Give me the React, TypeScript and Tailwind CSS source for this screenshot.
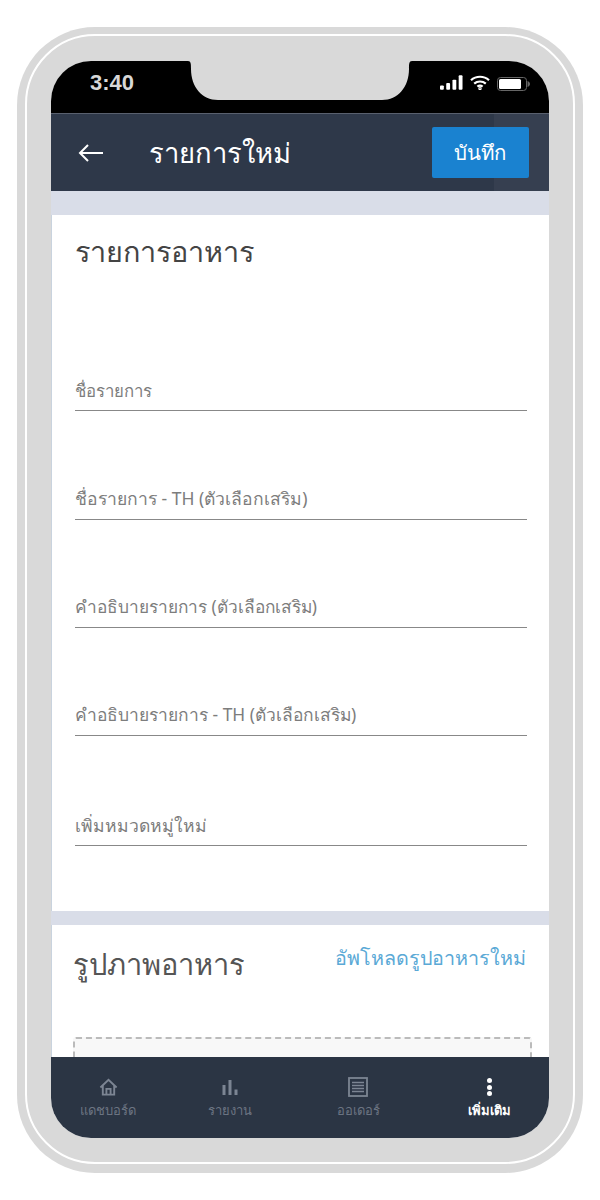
const fields = [
  { label: "ชื่อรายการ", cls: "h-[142px] pb-[7px] text-[16.8px]" },
  { label: "ชื่อรายการ - TH (ตัวเลือกเสริม)", cls: "h-[109px] pb-[9px] text-[17.55px]" },
  { label: "คำอธิบายรายการ (ตัวเลือกเสริม)", cls: "h-[108px] pb-2 text-[17.3px]" },
  { label: "คำอธิบายรายการ - TH (ตัวเลือกเสริม)", cls: "h-[108px] pb-[9px] text-[17.4px]" },
  { label: "เพิ่มหมวดหมู่ใหม่", cls: "h-[110px] pb-2 text-[17.5px]" },
];

const HomeIcon = () => (
  <svg width="19" height="18" viewBox="0 0 20 18" fill="none" stroke="currentColor" strokeWidth="2">
    <path d="M1.500 9.500 10 1.500l8.500 8" />
    <path d="M4 7.500V17h12V7.500" />
    <path d="M7.800 17v-6h4.400v6" />
  </svg>
);

const BarsIcon = () => (
  <svg width="16" height="15" viewBox="0 0 16 15" fill="currentColor">
    <rect x="0.500" y="5" width="3" height="10" />
    <rect x="6.500" y="0" width="3" height="15" />
    <rect x="12.500" y="9.500" width="3" height="5.500" />
  </svg>
);

const OrderIcon = () => (
  <svg width="20" height="20" viewBox="0 0 20 20" fill="none" stroke="currentColor" strokeWidth="1.800">
    <rect x="1" y="1" width="18" height="18" />
    <path d="M4 5.500h12M4 8.500h12M4 11.500h12M4 14.500h12" strokeWidth="1.400" />
  </svg>
);

const nav = [
  { label: "แดชบอร์ด", icon: <HomeIcon /> },
  { label: "รายงาน", icon: <BarsIcon /> },
  { label: "ออเดอร์", icon: <OrderIcon /> },
];

export default function App() {
  return (
    <div className="w-[600px] h-[1200px] bg-white py-[27px] px-[17px] font-['Noto_Sans','Liberation_Sans',sans-serif]">
      <div className="h-full bg-[#d9d9d9] rounded-[78px] pt-[7px] px-2 pb-[9px]">
        <div className="h-full border-2 border-white rounded-[70px] pt-[25px] px-6 pb-6">
          <div className="relative h-full flex flex-col overflow-hidden rounded-[40px] bg-white">
            {/* notch */}
            <svg className="absolute top-0 left-[137px]" width="224" height="39" viewBox="0 0 224 39" fill="#d9d9d9">
              <path d="M0 0C3 0 3 3 3 8C3 26 14 39 30 39H194C210 39 221 26 221 8C221 3 221 0 224 0Z" />
            </svg>

            <div className="h-[52px] shrink-0 bg-black flex justify-between pl-[39px] pr-[19px] pt-[10px]">
              <span className="text-[22px] leading-6 font-semibold text-[#d8d8d8] font-['Liberation_Sans',sans-serif]">3:40</span>
              <div className="flex items-start gap-[7px] pt-1 text-white">
                <svg width="23" height="15" viewBox="0 0 24 15" fill="currentColor">
                  <rect x="0" y="10.500" width="4" height="4.500" rx="1" />
                  <rect x="6.500" y="8" width="4" height="7" rx="1" />
                  <rect x="13" y="4.500" width="4" height="10.500" rx="1" />
                  <rect x="19.500" y="0" width="4" height="15" rx="1" />
                </svg>
                <svg width="20" height="15" viewBox="0 0 20 15" fill="none" stroke="currentColor" strokeWidth="2.200">
                  <path d="M1 5.200c5-4.600 13-4.600 18 0" />
                  <path d="M4.200 8.600c3.200-2.800 8.400-2.800 11.600 0" />
                  <path d="M7.400 11.600c1.500-1.200 3.700-1.200 5.200 0" />
                  <circle cx="10" cy="13.600" r="0.600" />
                </svg>
                <svg className="mt-[2px]" width="33" height="14" viewBox="0 0 33 14">
                  <rect x="0.500" y="0.500" width="29" height="13" rx="3" fill="none" stroke="#666" />
                  <rect x="2" y="2" width="22" height="10" rx="1.500" fill="#fff" />
                  <path d="M30.500 4v6c1.500-.5 2.500-1.800 2.500-3s-1-2.500-2.500-3z" fill="#666" />
                </svg>
              </div>
            </div>

            <div className="h-[78px] shrink-0 bg-[linear-gradient(90deg,#2e3849_89%,#363f50_89%)] border-t border-[#59606e] flex items-center pl-[27px] pr-5">
              <svg width="26" height="20" viewBox="0 0 26 20" fill="none" stroke="#fff" strokeWidth="2">
                <path d="M25 10H2M10 2l-8 8 8 8" />
              </svg>
              <h1 className="ml-[45px] text-[27.4px] font-medium text-white leading-8">รายการใหม่</h1>
              <button className="ml-auto w-[97px] h-[51px] pr-[2px] bg-[#1a82d0] rounded-[2px] text-white text-[20.400px]">
                บันทึก
              </button>
            </div>

            <div className="flex-1 min-h-0 overflow-hidden bg-[#d9dde8] pt-6">
              <div className="h-[696px] bg-white border-l border-[#c9d3de] pl-[23px] pr-[22px] pt-[18px]">
                <h2 className="text-[28.800px] leading-9 font-medium text-[#444]">รายการอาหาร</h2>
                {fields.map((f) => (
                  <div key={f.label} className={`${f.cls} flex items-end border-b border-[#888] leading-6 text-[#7d7d7d]`}>
                    {f.label}
                  </div>
                ))}
              </div>

              <div className="bg-white border-l border-[#c9d3de] mt-[14px] h-[300px] pl-[21px] pr-[17px]">
                <div className="h-[112px] flex justify-between items-start">
                  <h2 className="pt-[21px] text-[29px] leading-9 text-[#555]">รูปภาพอาหาร</h2>
                  <a className="pt-[15px] pr-[6px] text-[19.700px] leading-9 text-[#5aa9d6]">อัพโหลดรูปอาหารใหม่</a>
                </div>
                <div className="h-[120px] bg-[#f8f8f8] border-2 border-dashed border-[#bbb] rounded-[3px]" />
              </div>
            </div>

            <div className="h-[81px] shrink-0 bg-[#2b3544] grid grid-cols-[114px_130px_126px_128px]">
              {nav.map((item) => (
                <div key={item.label} className="flex flex-col items-center pt-5 text-[#7c8593]">
                  <div className="h-5 flex items-center">{item.icon}</div>
                  <span className="text-[13px] leading-5 mt-[3px] text-[#6b7482]">{item.label}</span>
                </div>
              ))}
              <div className="flex flex-col items-center pt-5 pl-2 text-white">
                <div className="h-5 flex flex-col items-center justify-between py-px">
                  <span className="w-[5px] h-[5px] rounded-full bg-white" />
                  <span className="w-[5px] h-[5px] rounded-full bg-white" />
                  <span className="w-[5px] h-[5px] rounded-full bg-white" />
                </div>
                <span className="text-[13px] leading-5 mt-[3px] font-semibold">เพิ่มเติม</span>
              </div>
            </div>
          </div>
        </div>
      </div>
    </div>
  );
}
